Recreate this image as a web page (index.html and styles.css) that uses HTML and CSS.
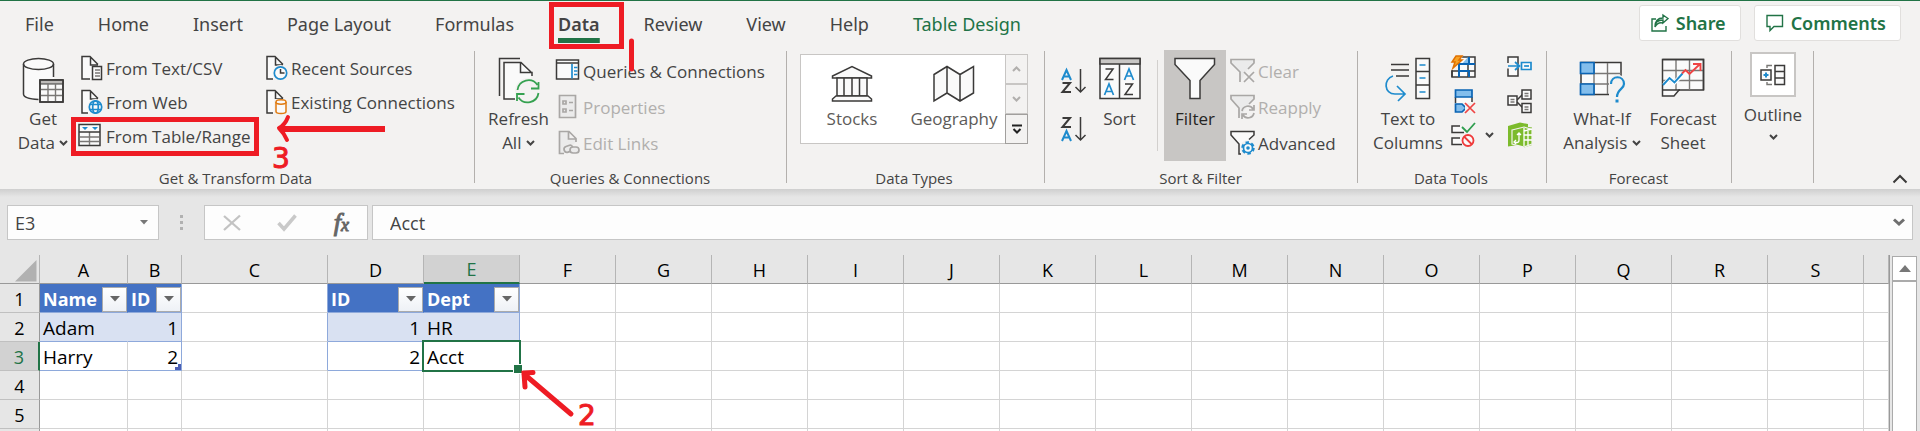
FILE: index.html
```html
<!DOCTYPE html>
<html lang="en">
<head>
<meta charset="utf-8">
<title>Workbook</title>
<link rel="stylesheet" href="styles.css">
</head>
<body>
<div class="app">
<header class="topbar">
  <nav class="tabs">
    <button class="tab">File</button>
    <button class="tab">Home</button>
    <button class="tab">Insert</button>
    <button class="tab">Page Layout</button>
    <button class="tab">Formulas</button>
    <button class="tab tab-active">Data</button>
    <button class="tab">Review</button>
    <button class="tab">View</button>
    <button class="tab">Help</button>
    <button class="tab tab-context">Table Design</button>
  </nav>
  <div class="actions">
    <button class="action"><svg width="18" height="18" viewBox="0 0 18 18" class="gl"><path d="M5 5H1v12h14v-5M4 13c0-5 3-7 8-7V9l5-4.500L12 1v3C7 4 4 7 4 13c2-4 4-5 8-4"/></svg>Share</button>
    <button class="action"><svg width="18" height="18" viewBox="0 0 18 18" class="gl"><path d="M1 1.500h15.500v11H8L4 16.500v-4H1z"/></svg>Comments</button>
  </div>
</header>

<main class="ribbon">
  <section class="group g-get">
    <div class="group-body">
      <button class="big"><svg width="42" height="46" viewBox="0 0 42 46"><path class="wf" d="M2 7v31c0 3 6 5 15 5V24h15V7" stroke="none"/><ellipse class="wf dk" cx="16.500" cy="7" rx="15" ry="5.500"/><path class="dk" d="M1.500 7v30c0 3 6 5 15 5.500M31.500 7v13"/><path class="wf dk" d="M18 23h23v22H18z"/><path fill="#bdbbb9" stroke="#3b3a39" d="M18 23h23v4H18z"/><path class="gy" d="M18 32.500h23M18 38.500h23M26 27v17M33.500 27v17"/><path class="dk" d="M18 23h23v22H18z"/></svg><span>Get</span><span>Data <svg class="caret" width="9" height="6" viewBox="0 0 9 6"><path d="M1 1l3.500 3.500L8 1"/></svg></span></button>
      <div class="list rows34 c1">
        <button class="item"><svg width="24" height="26" viewBox="0 0 24 26"><path class="wf" d="M2 2h9l8 8v14H2z" stroke="none"/><path class="dk" d="M10 24H2V1.500h8l8 8M10.500 2v8H18"/><path class="wf dk" d="M12.500 11.500h9v13h-9z"/><path class="gy" d="M15 15h5M15 18h5M15 21h5"/></svg>From Text/CSV</button>
        <button class="item"><svg width="24" height="26" viewBox="0 0 24 26"><path class="wf" d="M2 2h9l8 8v14H2z" stroke="none"/><path class="dk" d="M8 24H2V1.500h8l8 8M10.500 2v8H18"/><circle cx="15.500" cy="18" r="8" fill="#f3f2f1"/><g class="bl"><circle class="wf" cx="15.500" cy="18" r="6.200"/><ellipse cx="15.500" cy="18" rx="2.800" ry="6.200"/><path d="M10 15.500h11M10 20.500h11"/></g></svg>From Web</button>
        <button class="item"><svg width="24" height="26" viewBox="0 0 24 26"><path class="wf dk" d="M-1 1.500h21v21H-1z"/><path class="gy" d="M0 14h19M0 18.500h19M9.500 9v13"/><path class="dk" d="M-1 9h21"/><path d="M2 4h6l-3 3zM12 4h6l-3 3z" fill="#1e8bcd"/></svg>From Table/Range</button>
      </div>
      <div class="list rows34 c2">
        <button class="item"><svg width="24" height="26" viewBox="0 0 24 26"><path class="wf" d="M2 2h9l8 8v14H2z" stroke="none"/><path class="dk" d="M8 24H2V1.500h8l8 8M10.500 2v8H18"/><circle cx="15.500" cy="18" r="8" fill="#f3f2f1"/><circle class="wf bl" cx="15.500" cy="18" r="6.200"/><path class="dk" d="M15.500 14v4h4"/></svg>Recent Sources</button>
        <button class="item"><svg width="24" height="26" viewBox="0 0 24 26"><path class="wf" d="M2 2h9l8 8v14H2z" stroke="none"/><path class="dk" d="M8 24H2V1.500h8l8 8M10.500 2v8H18"/><path d="M9 10h14v16H9z" fill="#f3f2f1"/><g stroke="#e07a10" fill="#fafafa" stroke-width="1.500"><path d="M11 13v9.500c0 2.700 10 2.700 10 0V13"/><ellipse cx="16" cy="13" rx="5" ry="2.200"/></g></svg>Existing Connections</button>
      </div>
    </div>
    <div class="group-label">Get &amp; Transform Data</div>
  </section>

  <section class="group g-query">
    <div class="group-body">
      <button class="big"><svg width="42" height="46" viewBox="0 0 42 46"><path class="dk" d="M1.500 39V1.500H22"/><path class="wf" d="M6 6h17l10 10v26H6z" stroke="none"/><path class="dk" d="M17 42H6V5.500h17L33 15M22.500 6v9.500H34V19"/><circle cx="30" cy="34" r="13" fill="#f3f2f1"/><g fill="none" stroke="#35a150" stroke-width="1.800"><path d="M19.500 33a11 11 0 0 1 20-5M40.500 25v6.500H33M40.500 36a11 11 0 0 1-20 4.500M19 44v-7h7.500"/></g></svg><span>Refresh</span><span>All <svg class="caret" width="9" height="6" viewBox="0 0 9 6"><path d="M1 1l3.500 3.500L8 1"/></svg></span></button>
      <div class="list rows36">
        <button class="item"><svg width="26" height="26" viewBox="0 0 26 26"><path class="wf dk" d="M1.500 2h22v19h-22z"/><path class="dk" d="M1.500 5h22"/><path class="bl" d="M17 6v14.500M19 9.500h3.500M19 13h3.500M19 16.500h3.500"/></svg>Queries &amp; Connections</button>
        <button class="item" disabled><svg width="26" height="26" viewBox="0 0 26 26" class="off"><path d="M4.500 1.500h16v22h-16zM8 7h3v3H8zM8 15h3v3H8zM14 8.500h4M14 16.500h4"/></svg>Properties</button>
        <button class="item" disabled><svg width="26" height="26" viewBox="0 0 26 26" class="off"><path d="M9 23.500H4.500v-22H14l7 7V12M13.500 2v7H21"/><rect x="9" y="16" width="9" height="6" rx="3" transform="rotate(-20 13 19)"/><rect x="15" y="17" width="9" height="6" rx="3"/></svg>Edit Links</button>
      </div>
    </div>
    <div class="group-label">Queries &amp; Connections</div>
  </section>

  <section class="group g-types">
    <div class="group-body">
      <div class="gallery">
        <button class="card"><svg width="42" height="38" viewBox="0 0 42 38"><g class="dk"><path class="wf" d="M1.500 13v-2L21 1.500 40.500 11v2z"/><path class="wf" d="M6 13h30v18H6zM13 13v18M21 13v18M28.500 13v18"/><path class="wf" d="M1.500 36v-2L5 31h32l3.500 3v2z"/></g></svg><span>Stocks</span></button>
        <button class="card"><svg width="42" height="38" viewBox="0 0 42 38"><path class="wf dk" d="M1 9.500l13-8 13 8 13.500-8V28L27 36 14 28 1 36zM14 1.500V28M27 9.500V36"/></svg><span>Geography</span></button>
        <div class="scroller">
          <button aria-label="Up"><svg class="caret" width="9" height="6" viewBox="0 0 9 6"><path d="M1 5l3.500-3.500L8 5"/></svg></button>
          <button aria-label="Down"><svg class="caret" width="9" height="6" viewBox="0 0 9 6"><path d="M1 1l3.500 3.500L8 1"/></svg></button>
          <button aria-label="More" class="more"><svg width="12" height="10" viewBox="0 0 12 10"><path d="M1 1.500h10M2.500 5L6 8.500 9.500 5" fill="none" stroke="#222" stroke-width="2"/></svg></button>
        </div>
      </div>
    </div>
    <div class="group-label">Data Types</div>
  </section>

  <section class="group g-sort">
    <div class="group-body">
      <div class="azcol">
        <button aria-label="Sort A to Z"><svg width="26" height="26" viewBox="0 0 26 26"><path stroke="#1e8bcd" stroke-width="2" fill="none" d="M1 12L5.500 2l4.500 10M2.500 8.500h6"/><path class="dk bold" d="M1.500 15H9L1.500 24H10"/><path class="dk" d="M19.500 1v23M14.500 19l5 5 5-5"/></svg></button>
        <button aria-label="Sort Z to A"><svg width="26" height="26" viewBox="0 0 26 26"><path class="dk bold" d="M1.500 2H9L1.500 11H10"/><path stroke="#1e8bcd" stroke-width="2" fill="none" d="M1 25l4.500-10L10 25M2.500 21.500h6"/><path class="dk" d="M19.500 1v23M14.500 19l5 5 5-5"/></svg></button>
      </div>
      <button class="big b-sort"><svg width="42" height="46" viewBox="0 0 42 46"><path class="wf dk" d="M1 1.500h40v40H1z"/><path fill="#c8c6c4" stroke="#3b3a39" stroke-width="1.500" d="M1 1.500h40v5.500H1z"/><path class="dk" d="M20.500 7v34.500"/><path class="dk" d="M6.500 12h7.500L6.500 22.500h8M26 27h7.500L26 37.500h8"/><path class="bl" d="M5.500 38l4.500-11 4.500 11M7 34.500h6M25.500 23L30 12l4.500 11M27 19h6"/></svg><span>Sort</span></button>
      <button class="big b-filter"><svg width="42" height="46" viewBox="0 0 42 46"><path class="wf dk" d="M1 1.500h39.500v6L26 23.500v18H16v-18L1 7.500z"/></svg><span>Filter</span></button>
      <div class="list rows36">
        <button class="item" disabled><svg width="26" height="26" viewBox="0 0 26 26" class="off"><path d="M10 24V14L1 5V1.500h23V5l-6 6M14 14l10 10M24 14L14 24"/></svg>Clear</button>
        <button class="item" disabled><svg width="26" height="26" viewBox="0 0 26 26" class="off"><path d="M9 24V14L1 5V1.500h23V5l-5 5"/><path class="line" d="M12 17a6 6 0 0 1 11-2M24 11v5h-5M24 19a6 6 0 0 1-11 2M12 25v-5h5"/></svg>Reapply</button>
        <button class="item"><svg width="26" height="26" viewBox="0 0 26 26"><path class="wf dk" d="M11 24H9V14L1 5V1.500h23V5l-5 4.500"/><circle cx="18" cy="18" r="8" fill="#f3f2f1"/><circle cx="18" cy="18" r="5" fill="none" stroke="#1e8bcd" stroke-width="3.500" stroke-dasharray="3 2.200"/><circle class="wf bl" cx="18" cy="18" r="4.500"/><circle cx="18" cy="18" r="1.800" fill="#1e8bcd"/></svg>Advanced</button>
      </div>
    </div>
    <div class="group-label">Sort &amp; Filter</div>
  </section>

  <section class="group g-tools">
    <div class="group-body">
      <button class="big"><svg width="46" height="46" viewBox="0 0 46 46"><path class="dk" d="M6 7.500h18M6 13h18M11 19h13"/><path class="bl" d="M8 19C-2 22-1 37 10 37h9M12 29l8 8-7 7"/><path class="wf dk" d="M31 1.500h13.500v40H31zM31 14.500h13.500M31 28h13.500"/><path class="bl" d="M34.500 8h6M34.500 21h6M34.500 35h6"/></svg><span>Text to</span><span>Columns</span></button>
      <div class="tools">
        <button aria-label="Flash Fill"><svg width="26" height="26" viewBox="0 0 26 26"><path class="wf dk" d="M1 3h23v20H1z"/><path d="M0 0h12L8 16H0z" fill="#f3f2f1"/><path class="dk" d="M1 17h23M17 3v20M1 17v6"/><path fill="#83beec" d="M17 3v7h-6z"/><path stroke="#0a64b4" stroke-width="2" fill="none" d="M8 23V10h10V3M8 17h10v6M8 10h16"/><path fill="#f7a325" stroke="#e07000" stroke-width="1.500" d="M5 2h6L8 6h3L2 14l2-6H1z"/></svg></button>
        <button aria-label="Consolidate"><svg width="26" height="26" viewBox="0 0 26 26"><path class="wf dk" d="M1 9V3h10v7M1 14.500V22h10v-8"/><path class="bl" d="M1 12h11M8 8l4.500 4L8 16"/><path class="wf bl" d="M14.500 8.500H24v7h-9.500z"/><path class="bl" d="M17 12h5"/></svg></button>
        <button aria-label="Remove Duplicates"><svg width="26" height="26" viewBox="0 0 26 26"><path class="wf" d="M4 9h17v6H4z" stroke="none"/><path class="dk" d="M4.500 9v6M21 9v5"/><path fill="#83beec" stroke="#0a64b4" stroke-width="1.700" d="M4.500 2H21v7H4.500zM4.500 16H11l4 4-4 4H4.500z"/><path d="M14 15h10v10H14z" fill="#f3f2f1"/><path d="M14 15l10 10M24 15L14 25" stroke="#ef4444" stroke-width="1.700"/></svg></button>
        <button aria-label="Relationships"><svg width="26" height="26" viewBox="0 0 26 26"><path class="dk" d="M10 12l6-6M10 14l6 6"/><path class="wf dk" d="M1 8h9v9H1zM15 2h9v9h-9zM15 15.500h9v9h-9z"/><path class="gy" d="M3.500 11.500h4M3.500 14h4M17.500 5.500h4M17.500 8h4M17.500 19h4M17.500 21.500h4"/></svg></button>
        <button aria-label="Data Validation"><svg width="26" height="26" viewBox="0 0 26 26"><path class="wf dk" d="M13 10.500H1V4h8M11 22.500H1V16h8"/><path d="M11 5l5 5 8-9" fill="none" stroke="#2f9e4f" stroke-width="1.800"/><circle class="wf" cx="17" cy="18.500" r="5.500" stroke="#ef3b3b" stroke-width="1.800"/><path d="M13 14.500l8 8" stroke="#ef3b3b" stroke-width="1.800"/></svg></button>
        <button aria-label="Manage Data Model"><svg width="26" height="26" viewBox="0 0 26 26"><path fill="#7cbb2c" d="M1 4L13 .500 21 2v3l4 .500V23l-8 2.500V22L1 24.500z"/><path fill="#7cbb2c" stroke="#f3f2f1" stroke-width="1.200" d="M5 8l12-3 8 2.500V22l-8 3-12-3z"/><path stroke="#fff" stroke-width="1.300" fill="none" d="M17 9l8-2M17 6v18M17 13h8M17 18h8M21 7v16M12 12v6c0 4-4 2-4 2M10 13l2-2 2 2M9 18l-2 2 2 2"/></svg></button>
      </div>
      <button class="dd" aria-label="Data Validation options"><svg class="caret" width="9" height="6" viewBox="0 0 9 6"><path d="M1 1l3.500 3.500L8 1"/></svg></button>
    </div>
    <div class="group-label">Data Tools</div>
  </section>

  <section class="group g-forecast">
    <div class="group-body">
      <button class="big"><svg width="46" height="46" viewBox="0 0 46 46"><path class="wf dk" d="M2 5.500h40v32H2z"/><path class="gy" d="M2 16.500h40M2 27h40M15 6v31M28.500 6v31"/><path fill="#83beec" stroke="#0a64b4" stroke-width="1.700" d="M1.500 5.500H15v11H1.500zM1.500 27H15v10.500H1.500z"/><path d="M30 26c0-10 16-12 16 0v20H30z" fill="#f3f2f1"/><path d="M32 27c0-9 13-9 13 0 0 5-7 5-7 13" fill="none" stroke="#1e8bcd" stroke-width="2.200"/><path d="M36.500 42.500h3v3h-3z" fill="#1e8bcd"/></svg><span>What-If</span><span>Analysis <svg class="caret" width="9" height="6" viewBox="0 0 9 6"><path d="M1 1l3.500 3.500L8 1"/></svg></span></button>
      <button class="big b-sheet"><svg width="44" height="46" viewBox="0 0 44 46"><path class="wf dk" d="M1.500 2.500h41v30.500H18l-5 6H1.500z"/><path class="gy" d="M2 13.500h40M2 23.500h40M15 3v30M28.500 3v30"/><path class="dk" d="M1.500 33H19M1.500 2.500h41v30.500"/><path d="M3 28l5.500-7 5 4.500 8-8" fill="none" stroke="#fff" stroke-width="4"/><path d="M2 28l6.500-7 5 4.500 8-9" fill="none" stroke="#1e8bcd" stroke-width="1.900"/><path d="M21 16.500l3.500-3.500 4 4L39 7M32 7h7.500v7" fill="none" stroke="#ef4444" stroke-width="1.900"/></svg><span>Forecast</span><span>Sheet</span></button>
    </div>
    <div class="group-label">Forecast</div>
  </section>

  <section class="group g-outline">
    <div class="group-body">
      <button class="outline"><span class="frame"><svg width="26" height="22" viewBox="0 0 26 22"><path class="wf dk" d="M1 6h10v10H1zM15 1.500h9.500v19H15zM15 7.500h9.500M15 14h9.500"/><path class="gy" d="M7 4V1.500h5M7 18v2.500h5"/><path stroke="#1e8bcd" stroke-width="2" d="M3.500 11h5M6 8.500v5"/></svg></span><span>Outline</span><svg class="caret" width="9" height="6" viewBox="0 0 9 6"><path d="M1 1l3.500 3.500L8 1"/></svg></button>
    </div>
  </section>
  <button class="collapse" aria-label="Collapse the ribbon"><svg width="16" height="10" viewBox="0 0 16 10"><path class="dk bold" d="M1.500 8.500L8 2l6.500 6.500"/></svg></button>
</main>

<div class="fbar">
  <div class="namebox"><input aria-label="Name box" value="E3"><button aria-label="Names"><svg width="8" height="5" viewBox="0 0 8 5"><path d="M0 0h8L4 4.500z" fill="#777"/></svg></button></div>
  <div class="dots"><i></i><i></i><i></i></div>
  <div class="fxbox">
    <button aria-label="Cancel"><svg width="18" height="17" viewBox="0 0 18 17"><path d="M1 2l16 14M17 1.500L1 16" stroke="#c3c3c3" stroke-width="2.300"/></svg></button>
    <button aria-label="Enter"><svg width="20" height="17" viewBox="0 0 20 17"><path d="M1.500 9l5.500 6L18.500 1.500" fill="none" stroke="#c9c9c9" stroke-width="3.500"/></svg></button>
    <button class="fx">f<small>x</small></button>
  </div>
  <div class="formula"><input aria-label="Formula" value="Acct"><button aria-label="Expand"><svg width="12" height="9" viewBox="0 0 12 9"><path d="M1 1.500l5 4.500 5-4.500" fill="none" stroke="#6f6f6f" stroke-width="3"/></svg></button></div>
</div>

<div class="sheet">
<div class="grid">
<table>
<colgroup><col class="w-head"><col class="w-a"><col class="w-b"><col class="w-c"><col class="w-n" span="16"><col></colgroup>
<thead><tr><th class="corner"><svg width="22" height="22" viewBox="0 0 22 22"><path d="M21.500 0v21.500H0z" fill="#b1b1b1"/></svg></th><th>A</th><th>B</th><th>C</th><th>D</th><th class="on">E</th><th>F</th><th>G</th><th>H</th><th>I</th><th>J</th><th>K</th><th>L</th><th>M</th><th>N</th><th>O</th><th>P</th><th>Q</th><th>R</th><th>S</th><th></th></tr></thead>
<tbody>
<tr><th>1</th>
<td class="th"><div>Name<button aria-label="Filter Name"><svg width="10" height="6" viewBox="0 0 10 6"><path d="M0 0h10L5 5.500z"/></svg></button></div></td>
<td class="th end"><div>ID<button aria-label="Filter ID"><svg width="10" height="6" viewBox="0 0 10 6"><path d="M0 0h10L5 5.500z"/></svg></button></div></td>
<td class="pre"></td>
<td class="th"><div>ID<button aria-label="Filter ID"><svg width="10" height="6" viewBox="0 0 10 6"><path d="M0 0h10L5 5.500z"/></svg></button></div></td>
<td class="th end"><div>Dept<button aria-label="Filter Dept"><svg width="10" height="6" viewBox="0 0 10 6"><path d="M0 0h10L5 5.500z"/></svg></button></div></td>
<td></td><td></td><td></td><td></td><td></td><td></td><td></td><td></td><td></td><td></td><td></td><td></td><td></td><td></td><td></td></tr>
<tr><th>2</th><td class="band">Adam</td><td class="band num end">1</td><td class="pre"></td><td class="band num">1</td><td class="band end">HR</td>
<td></td><td></td><td></td><td></td><td></td><td></td><td></td><td></td><td></td><td></td><td></td><td></td><td></td><td></td><td></td></tr>
<tr><th class="on">3</th><td class="last">Harry</td><td class="last num end corner-mark">2</td><td class="pre"></td><td class="last num">2</td><td class="last sel">Acct</td>
<td></td><td></td><td></td><td></td><td></td><td></td><td></td><td></td><td></td><td></td><td></td><td></td><td></td><td></td><td></td></tr>
<tr><th>4</th><td></td><td></td><td></td><td></td><td></td><td></td><td></td><td></td><td></td><td></td><td></td><td></td><td></td><td></td><td></td><td></td><td></td><td></td><td></td><td></td></tr>
<tr><th>5</th><td></td><td></td><td></td><td></td><td></td><td></td><td></td><td></td><td></td><td></td><td></td><td></td><td></td><td></td><td></td><td></td><td></td><td></td><td></td><td></td></tr>
<tr><th></th><td></td><td></td><td></td><td></td><td></td><td></td><td></td><td></td><td></td><td></td><td></td><td></td><td></td><td></td><td></td><td></td><td></td><td></td><td></td><td></td></tr>
</tbody>
</table>
</div>
<div class="vscroll"><button aria-label="Scroll up"><svg width="12" height="7" viewBox="0 0 12 7"><path d="M0 7h12L6 0z" fill="#777"/></svg></button><div class="thumb"></div></div>
</div>

<svg class="marks" width="640" height="431" viewBox="0 0 640 431">
  <g fill="none" stroke="#ee1c24" stroke-width="5">
    <path d="M551.500 4.500h70v42h-70zM73.500 119.500h183v34h-183z"/>
    <path d="M631.500 41v28" stroke-linecap="round"/>
    <path d="M385 129H282" stroke-width="6"/>
    <path d="M288 117q-3 8-9 11 5 5 8 12" stroke-width="4" stroke-linecap="round" stroke-linejoin="round"/>
    <path d="M571 414L524 374M525 387l-1-14 9-.500" stroke-linecap="round"/>
  </g>
  <text class="note" x="272" y="168">3</text>
  <text class="note" x="578" y="425">2</text>
</svg>
</div>
</body>
</html>
```

FILE: styles.css
```css
* { box-sizing: border-box; }
body {
  margin: 0;
  background: #e6e6e6;
  color: #444;
  font-family: "Open Sans", "Noto Sans", sans-serif;
  font-size: 17px;
}
button, input {
  font: inherit;
  color: inherit;
  background: none;
  border: 0;
  padding: 0;
  margin: 0;
}
button:disabled { color: #b1afad; }
svg { display: block; flex: none; overflow: visible; }

.app {
  position: relative;
  display: flex;
  flex-direction: column;
  height: 100vh;
  overflow: hidden;
}

/* icon strokes */
.dk { fill: none; stroke: #3b3a39; stroke-width: 1.5; }
.bold { stroke-width: 2; }
.gy { fill: none; stroke: #797775; stroke-width: 1.4; }
.bl { fill: none; stroke: #1e8bcd; stroke-width: 1.7; }
.gl { fill: none; stroke: #217346; stroke-width: 1.4; }
.wf { fill: #fafafa; }
.off { fill: #ebebeb; stroke: #a9a7a5; stroke-width: 1.7; }
.line { fill: none; }
.caret { fill: none; stroke: currentColor; stroke-width: 2; }

/* tab strip */
.topbar {
  display: flex;
  justify-content: space-between;
  height: 48px;
  background: #f3f2f1;
  border-top: 1px solid #217346;
  font-family: "Noto Sans", "Open Sans", sans-serif;
  font-size: 18px;
}
.tabs { display: flex; gap: 44px; padding-left: 25px; }
.tab { height: 46px; white-space: nowrap; }
.tab-active {
  font-weight: 600;
  background: linear-gradient(#217346, #217346) center 37px / 100% 5px no-repeat;
}
.tab-context { color: #217346; }
.actions { display: flex; gap: 13px; padding: 4px 19px 0 0; }
.action {
  display: flex;
  align-items: center;
  gap: 7px;
  height: 36px;
  padding: 0 14px 0 11px;
  background: #fff;
  border: 1px solid #e1dfdd;
  border-radius: 3px;
  color: #217346;
  font-weight: 600;
}

/* ribbon */
.ribbon {
  position: relative;
  display: flex;
  height: 141px;
  flex: none;
  background: #f3f2f1;
}
.group {
  position: relative;
  display: flex;
  flex-direction: column;
  justify-content: space-between;
  padding: 2px 0 0;
}
.group::after {
  content: "";
  position: absolute;
  right: 0;
  top: 3px;
  bottom: 6px;
  width: 1px;
  background: #b3b0ad;
}
.group-body { display: flex; align-items: flex-start; }
.group-label { text-align: center; font-size: 15px; line-height: 20px; padding-bottom: 1px; }
.g-get { width: 475px; padding-left: 8px; }
.g-query { width: 312px; padding-left: 10px; }
.g-types { width: 258px; }
.g-sort { width: 313px; padding-left: 14px; }
.g-tools { width: 189px; padding-left: 13px; }
.g-forecast { width: 185px; padding-left: 10px; }
.g-outline { width: 82px; }
.g-get .group-label { padding-right: 12px; }
.g-query .group-label { padding-right: 12px; }
.g-types .group-label { padding-right: 4px; }
.g-sort .group-label { padding-right: 16px; }
.g-tools .group-label { padding-right: 16px; }
.g-forecast .group-label { padding-right: 12px; }

.big {
  display: flex;
  flex-direction: column;
  align-items: center;
  width: 70px;
  padding-top: 7px;
  line-height: 24px;
  white-space: nowrap;
}
.big > svg { margin-bottom: 4px; }
.big .caret { display: inline-block; vertical-align: 3px; }
.list { display: flex; flex-direction: column; }
.item { display: flex; align-items: center; gap: 2px; white-space: nowrap; }
.rows34 .item { height: 34px; }
.rows36 .item { height: 36px; }
.rows34 { padding-top: 1px; }
.rows36 { padding-top: 3px; }
.c1 { width: 185px; padding-left: 2px; }
.g-get .c2 { padding-left: 2px; }
.g-query .big { width: 65px; margin-left: 1px; }
.g-query .rows36 { padding-left: 4px; }

.gallery {
  display: flex;
  height: 90px;
  margin: 4px 0 0 13px;
  background: #fff;
  border: 1px solid #c8c6c4;
}
.card {
  display: flex;
  flex-direction: column;
  align-items: center;
  gap: 4px;
  width: 102px;
  padding-top: 10px;
  color: #5d5b59;
}
.scroller { display: flex; flex-direction: column; width: 23px; margin: -1px -1px -1px 0; }
.scroller button {
  display: grid;
  place-items: center;
  flex: 1;
  background: #f3f2f1;
  border: 1px solid #c8c6c4;
  color: #b1afad;
}
.scroller .more { border-color: #a19f9d; }

.azcol { display: flex; flex-direction: column; gap: 22px; padding: 18px 0 0 2px; }
.b-sort { position: relative; width: 63px; margin: 0 13px 0 1px; }
.b-sort::after {
  content: "";
  position: absolute;
  right: -7px;
  top: 10px;
  height: 91px;
  width: 1px;
  background: #d2d0ce;
}
.b-filter { width: 62px; height: 111px; background: #c8c6c4; color: #252423; }
.g-sort .rows36 { padding-left: 4px; }

.g-tools .big { width: 74px; }
.tools { display: grid; grid-template-columns: 26px 26px; column-gap: 30px; padding-left: 6px; }
.tools button { height: 34px; display: flex; align-items: center; }
.dd { position: absolute; left: 127px; top: 84px; }
.g-forecast .big { width: 90px; }
.g-forecast .b-sheet { width: 72px; }
.outline {
  display: flex;
  flex-direction: column;
  align-items: center;
  width: 82px;
  padding-top: 2px;
}
.frame {
  display: grid;
  place-items: center;
  width: 46px;
  height: 45px;
  margin-bottom: 6px;
  background: #fff;
  border: 2px solid #c8c6c4;
}
.outline .caret { margin-top: 8px; }
.collapse { margin: auto 12px 5px auto; }

/* formula bar */
.fbar {
  display: flex;
  flex: none;
  height: 66px;
  padding: 16px 7px 15px;
  background: linear-gradient(#cfcfcf, #e6e6e6 8px);
  font-size: 18px;
}
.namebox, .fxbox, .formula {
  display: flex;
  align-items: center;
  background: #fdfdfd;
  border: 1px solid #c6c6c6;
}
.namebox { width: 152px; padding: 0 10px 0 7px; }
.namebox input, .formula input { flex: 1; min-width: 0; }
.dots { display: flex; flex-direction: column; justify-content: center; gap: 3px; width: 45px; align-items: center; }
.dots i { width: 3px; height: 3px; background: #b1b1b1; }
.fxbox { width: 164px; justify-content: space-between; padding: 0 18px; margin-right: 4px; }
.fx { font: italic 26px "Liberation Serif", serif; color: #666; -webkit-text-stroke: 1px #666; }
.fx small { font-size: 18px; }
.formula { flex: 1; padding: 0 7px 0 17px; }

/* grid */
.sheet { display: flex; flex: 1; min-height: 0; }
.grid { flex: 1; min-width: 0; border-right: 1px solid #999; background: #fff; }
table { width: 100%; table-layout: fixed; border-collapse: separate; border-spacing: 0; color: #000; font-size: 19px; }
.w-head { width: 40px; }
.w-a { width: 88px; }
.w-b { width: 54px; }
.w-c { width: 146px; }
.w-n { width: 96px; }
th, td {
  height: 29px;
  padding: 2px 3px 0;
  line-height: 26px;
  border-right: 1px solid #d4d4d4;
  border-bottom: 1px solid #d4d4d4;
  white-space: nowrap;
}
th { background: #e6e6e6; font-size: 18px; font-weight: 400; padding: 2px 0 0; border-color: #c0c0c0; }
thead th { border-bottom-color: #999; border-right-color: #b5b5b5; }
tbody th { border-right-color: #999; }
thead .on { background: #d2d2d2; color: #217346; border-bottom: 2px solid #217346; line-height: 25px; }
tbody .on { background: #d2d2d2; color: #217346; border-right: 2px solid #217346; }
.corner svg { margin: 1px 0 0 15px; }
.th { background: #4472c4; color: #fff; font-size: 18px; font-weight: 700; border-color: #8ea9db; border-right-color: #4472c4; padding-right: 0; }
.th div { display: flex; justify-content: space-between; align-items: center; height: 26px; }
.th button {
  display: grid;
  place-items: center;
  width: 25px;
  height: 25px;
  background: linear-gradient(#fff, #eef1f6);
  border: 1px solid #ababab;
}
.th path { fill: #666; }
.band { background: #d9e1f2; border-color: #8ea9db; border-right-color: #d9e1f2; }
.last { border-bottom-color: #8ea9db; }
.end { border-right-color: #8ea9db; }
.pre { border-right-color: #8ea9db; }
.num { text-align: right; }
.corner-mark { position: relative; }
.corner-mark::after {
  content: "";
  position: absolute;
  right: 0;
  bottom: 0;
  width: 6px;
  height: 6px;
  background: #4a5fb5;
  clip-path: polygon(50% 0, 100% 0, 100% 100%, 0 100%, 0 50%, 50% 50%);
}
.sel { position: relative; }
.sel::before {
  content: "";
  position: absolute;
  inset: -2px;
  border: 2px solid #217346;
}
.sel::after {
  content: "";
  position: absolute;
  right: -4px;
  bottom: -4px;
  width: 8px;
  height: 8px;
  background: #217346;
  border: 1px solid #fff;
}
.vscroll { display: flex; flex-direction: column; width: 30px; padding: 1px 3px 0 2px; }
.vscroll button { display: grid; place-items: center; height: 25px; background: #fff; border: 1px solid #ababab; }
.thumb { flex: 1; background: #fff; border: 1px solid #ababab; border-bottom: 0; }

/* hand-drawn notes above the window */
.marks { position: absolute; left: 0; top: 0; pointer-events: none; }
.note { font: 28px "DejaVu Sans", sans-serif; fill: #ee1c24; stroke: #ee1c24; stroke-width: 1; }
```
